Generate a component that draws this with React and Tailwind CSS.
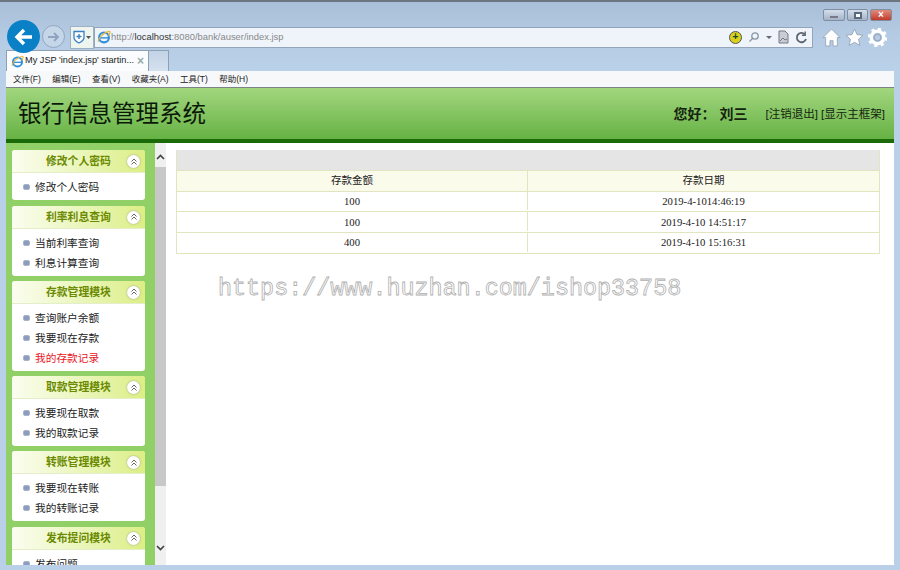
import React from "react";

const cjk = "font-['Liberation_Sans','Noto_Sans_CJK_SC',sans-serif]";

const menu = ["文件(F)", "编辑(E)", "查看(V)", "收藏夹(A)", "工具(T)", "帮助(H)"];
const groups = [
  { title: "修改个人密码", items: ["修改个人密码"] },
  { title: "利率利息查询", items: ["当前利率查询", "利息计算查询"] },
  { title: "存款管理模块", items: ["查询账户余额", "我要现在存款", "我的存款记录"], active: 2 },
  { title: "取款管理模块", items: ["我要现在取款", "我的取款记录"] },
  { title: "转账管理模块", items: ["我要现在转账", "我的转账记录"] },
  { title: "发布提问模块", items: ["发布问题"] },
];
const rows = [
  ["100", "2019-4-1014:46:19"],
  ["100", "2019-4-10 14:51:17"],
  ["400", "2019-4-10 15:16:31"],
];

function IeLogo({ size = 14 }) {
  return (
    <svg width={size} height={size} viewBox="0 0 16 16" className="shrink-0">
      <circle cx="8" cy="8.5" r="5.6" fill="none" stroke="#2f8fdc" strokeWidth="2.4" />
      <path d="M3 9h10.5" stroke="#2f8fdc" strokeWidth="1.6" />
      <path d="M1.5 13.5C1 10 8 2 14 1.5c1.5 0 1 3-1 5" fill="none" stroke="#e8b53a" strokeWidth="1.3" />
    </svg>
  );
}

function WinBtn({ className, children }) {
  return (
    <div className={`h-[12px] rounded-[2px] border border-[#7f8fa3] flex items-center justify-center ${className}`}>
      {children}
    </div>
  );
}

function Group({ g }) {
  return (
    <div className="rounded-[3px] overflow-hidden bg-white shrink-0">
      <div className="h-[23px] flex items-center relative bg-gradient-to-r from-[#fbfdf0] to-[#dcee84] border-b border-[#e4eecb]">
        <span className="ml-[34px] text-[10.800px] leading-[20px] font-bold text-[#6b8a00]">{g.title}</span>
        <div className="absolute right-[5px] top-[5px] w-[13px] h-[13px] rounded-full bg-white shadow-[0_0_2px_#999] flex items-center justify-center">
          <svg width="8" height="8" viewBox="0 0 8 8" fill="none" stroke="#666" strokeWidth="1">
            <path d="M1.500 3.500 4 1l2.500 2.500M1.500 6.500 4 4l2.500 2.500" />
          </svg>
        </div>
      </div>
      <div className="pt-[4px] pb-[3px]">
        {g.items.map((it, i) => (
          <div key={it} className="h-[20px] flex items-center pl-[11px]">
            <span className="w-[7px] h-[6px] rounded-[2px] bg-[#8c9cc0] border border-[#a9b4c4] mr-[5px]" />
            <span className={`text-[10.700px] ${g.active === i ? "text-[#e8141c]" : "text-[#222]"}`}>{it}</span>
          </div>
        ))}
      </div>
    </div>
  );
}

function TRow({ a, b, header }) {
  return (
    <div className={`flex h-[20.700px] border-b border-[#e2e6c0] text-[#222] ${header ? "bg-[#fbfbec] text-[10.500px]" : "bg-white font-['Liberation_Serif',serif] text-[10.700px] pb-[1px]"}`}>
      <div className="w-[351px] border-r border-[#e2e6c0] flex items-center justify-center">{a}</div>
      <div className="flex-1 flex items-center justify-center">{b}</div>
    </div>
  );
}

export default function App() {
  return (
    <div className={`relative w-[900px] h-[570px] overflow-hidden flex flex-col bg-[#b9d0e8] ${cjk}`}>
      {/* browser chrome */}
      <div className="h-[71px] shrink-0 border-t-2 border-[#6c7480] bg-gradient-to-b from-[#a9bfd9] via-[#b5cbe3] to-[#b9d1e9] relative">
        <div className="flex items-center gap-[2px] justify-end pr-[8px] pt-[6px] h-[20px]">
          <WinBtn className="w-[22px] bg-gradient-to-b from-[#d5dfeb] to-[#a4b3c6]">
            <div className="w-[8px] h-[2px] mt-[4px] bg-white border border-[#778]" />
          </WinBtn>
          <WinBtn className="w-[21px] bg-gradient-to-b from-[#d5dfeb] to-[#a4b3c6]">
            <div className="w-[8px] h-[7px] border-2 border-[#5a6a7c] bg-white" />
          </WinBtn>
          <WinBtn className="w-[22px] bg-gradient-to-b from-[#e08a7c] to-[#c0382a]">
            <span className="text-white text-[10px] leading-none font-bold">×</span>
          </WinBtn>
        </div>
        <div className="flex items-center mt-[4px] h-[22px] pl-[70px]">
          <div className="w-[24px] h-[23px] bg-[#eef5ee] border border-[#9fb0c2] flex items-center justify-center gap-[1px] shrink-0">
            <svg width="12" height="14" viewBox="0 0 12 14">
              <path d="M1 1.500h10v6c0 3-3 4.500-5 5.500-2-1-5-2.500-5-5.500z" fill="#fff" stroke="#3b7fc4" strokeWidth="1.300" />
              <path d="M6 4v5M3.500 6.500h5" stroke="#3b7fc4" strokeWidth="1.400" />
            </svg>
            <svg width="5" height="3" viewBox="0 0 5 3"><path d="M0 0h5L2.500 3z" fill="#555" /></svg>
          </div>
          <div className="w-[719px] h-[21px] bg-[#eff4fb] border border-[#93a5ba] flex items-center pl-[2px] shrink-0">
            <IeLogo size={14} />
            <span className="text-[9.400px] text-[#888] font-['Liberation_Sans',sans-serif]">
              http://<span className="text-[#333]">localhost</span>:8080/bank/auser/index.jsp
            </span>
            <div className="ml-auto flex items-center gap-[6px] pr-[4px]">
              <div className="w-[13px] h-[13px] rounded-full bg-[#d9d11c] border border-[#555] flex items-center justify-center">
                <span className="text-[10px] leading-none font-bold text-[#143]">+</span>
              </div>
              <svg width="12" height="12" viewBox="0 0 12 12" fill="none" stroke="#8a93a0" strokeWidth="1.300"><circle cx="7" cy="5" r="3.200" /><path d="M4.500 7.500 1.500 10.500" /></svg>
              <svg width="6" height="3" viewBox="0 0 6 3"><path d="M0 0h6L3 3z" fill="#667" /></svg>
              <svg width="11" height="14" viewBox="0 0 11 14"><path d="M1 1h6l3 3v9H1z" fill="#c9ccd2" stroke="#778" /><path d="m2 11 3-3 2 2 2-1" fill="none" stroke="#778" /></svg>
              <svg width="13" height="13" viewBox="0 0 14 14" fill="none" stroke="#5d6670" strokeWidth="2"><path d="M11.800 8.500a5 5 0 1 1-1.300-5" /><path d="M11 0.500v4H7.500" strokeWidth="1.500" /></svg>
            </div>
          </div>
          <div className="flex items-center gap-[4px] ml-[9px]">
            <svg width="19" height="19" viewBox="0 0 18 18" fill="#fff" stroke="#7d8ea3" strokeWidth="0.600"><path d="M9 1 1 9h2.500v8h4v-5h3v5h4V9H17z" /></svg>
            <svg width="19" height="19" viewBox="0 0 18 18" fill="#fff" stroke="#7d8ea3" strokeWidth="0.600"><path d="m9 1 2.400 5.300 5.600.6-4.200 3.800 1.200 5.700L9 13.500l-5 2.900 1.200-5.700L1 6.900l5.600-.6z" /></svg>
            <svg width="19" height="19" viewBox="0 0 18 18"><circle cx="9" cy="9" r="6" fill="none" stroke="#fff" strokeWidth="3" /><circle cx="9" cy="9" r="8" fill="none" stroke="#fff" strokeWidth="2.500" strokeDasharray="3 3.300" /><circle cx="9" cy="9" r="3.200" fill="none" stroke="#8b9bb0" strokeWidth="0.800" /></svg>
          </div>
        </div>
        {/* tabs */}
        <div className="absolute left-[6px] bottom-0 flex h-[21px]">
          <div className="w-[143px] bg-[#fbfcfd] border border-b-0 border-[#8ea0b4] flex items-center pl-[4px]">
            <IeLogo size={13} />
            <span className="ml-[1px] text-[9.200px] text-[#222] whitespace-nowrap font-['Liberation_Sans',sans-serif]">My JSP 'index.jsp' startin...</span>
            <span className="ml-auto mr-[4px] text-[#9aa] text-[12px] leading-none font-bold">×</span>
          </div>
          <div className="w-[20px] bg-gradient-to-b from-[#c2d3e6] to-[#d5e1ee] border border-b-0 border-l-0 border-[#8ea0b4]" />
        </div>
        {/* round buttons overlap the chrome */}
        <div className="absolute left-[7px] top-[18px] w-[33px] h-[33px] rounded-full bg-[#0a80c6] flex items-center justify-center">
          <svg width="20" height="18" viewBox="0 0 20 18" fill="none" stroke="#fff" strokeWidth="3.400"><path d="M18 9H3M10 2 3 9l7 7" /></svg>
        </div>
        <div className="absolute left-[42px] top-[23px] w-[23px] h-[23px] rounded-full border border-[#8fa6c0] bg-[#c5d6e9] flex items-center justify-center">
          <svg width="13" height="12" viewBox="0 0 13 12" fill="none" stroke="#8ea3bd" strokeWidth="1.800"><path d="M1 6h10M7 2l4 4-4 4" /></svg>
        </div>
      </div>

      {/* page */}
      <div className="flex-1 min-h-0 flex flex-col ml-[6px] mr-[6px] mb-[5px] bg-white">
        <div className="h-[17px] pt-[1px] shrink-0 bg-[#f7f8f9] border-b border-[#7c8388] flex items-center pl-[7px] gap-[11.400px] text-[8.500px] text-[#222]">
          {menu.map((m) => (
            <span key={m} className="whitespace-nowrap">{m}</span>
          ))}
        </div>
        <div className="h-[55px] shrink-0 bg-gradient-to-b from-[#a2d67e] to-[#66b244] border-b-[4px] border-[#1b6a08] flex items-center justify-between pl-[12px] pr-[9px]">
          <span className="text-[23.500px] leading-none pt-[2px] text-[#0b1a08]">银行信息管理系统</span>
          <div className="flex items-center text-[#14240f] pt-[2px]">
            <span className="text-[14px] font-bold mr-[18px] whitespace-pre">您好：<span className="ml-[4px]">刘三</span></span>
            <span className="text-[11.500px]">[注销退出] [显示主框架]</span>
          </div>
        </div>
        <div className="flex-1 min-h-0 flex">
          <div className="w-[149px] shrink-0 bg-[#90d066] pl-[6px] pr-[10px] pt-[7.300px] flex flex-col gap-[5.300px] overflow-hidden">
            {groups.map((g) => (
              <Group key={g.title} g={g} />
            ))}
          </div>
          <div className="w-[11px] shrink-0 bg-[#f0f0f0] flex flex-col items-center">
            <div className="h-[24px] w-full flex items-start justify-center pt-[11px]">
              <svg width="9" height="6" viewBox="0 0 9 6" fill="none" stroke="#444" strokeWidth="1.700"><path d="m1 5 3.500-3.500L8 5" /></svg>
            </div>
            <div className="h-[319px] w-full bg-[#c8c8c8]" />
            <div className="mt-auto h-[20px] w-full flex items-start justify-center">
              <svg width="9" height="6" viewBox="0 0 9 6" fill="none" stroke="#444" strokeWidth="1.700"><path d="m1 1 3.500 3.500L8 1" /></svg>
            </div>
          </div>
          <div className="flex-1 pl-[10px] pr-[14px] pt-[7px]">
            <div className="border-x border-[#e2e6c0]">
              <div className="h-[21px] bg-[#e5e5e5] border-b border-[#e2e6c0]" />
              <TRow a="存款金额" b="存款日期" header />
              {rows.map((r, i) => (
                <TRow key={i} a={r[0]} b={r[1]} />
              ))}
            </div>
          </div>
        </div>
      </div>

      {/* watermark */}
      <div className="absolute left-[218px] top-[273px] text-[23.400px] leading-[32px] whitespace-nowrap text-white font-['Liberation_Mono',monospace] [-webkit-text-stroke:0.8px_#b0b0b0]">
        https://www.huzhan.com/ishop33758
      </div>
    </div>
  );
}
